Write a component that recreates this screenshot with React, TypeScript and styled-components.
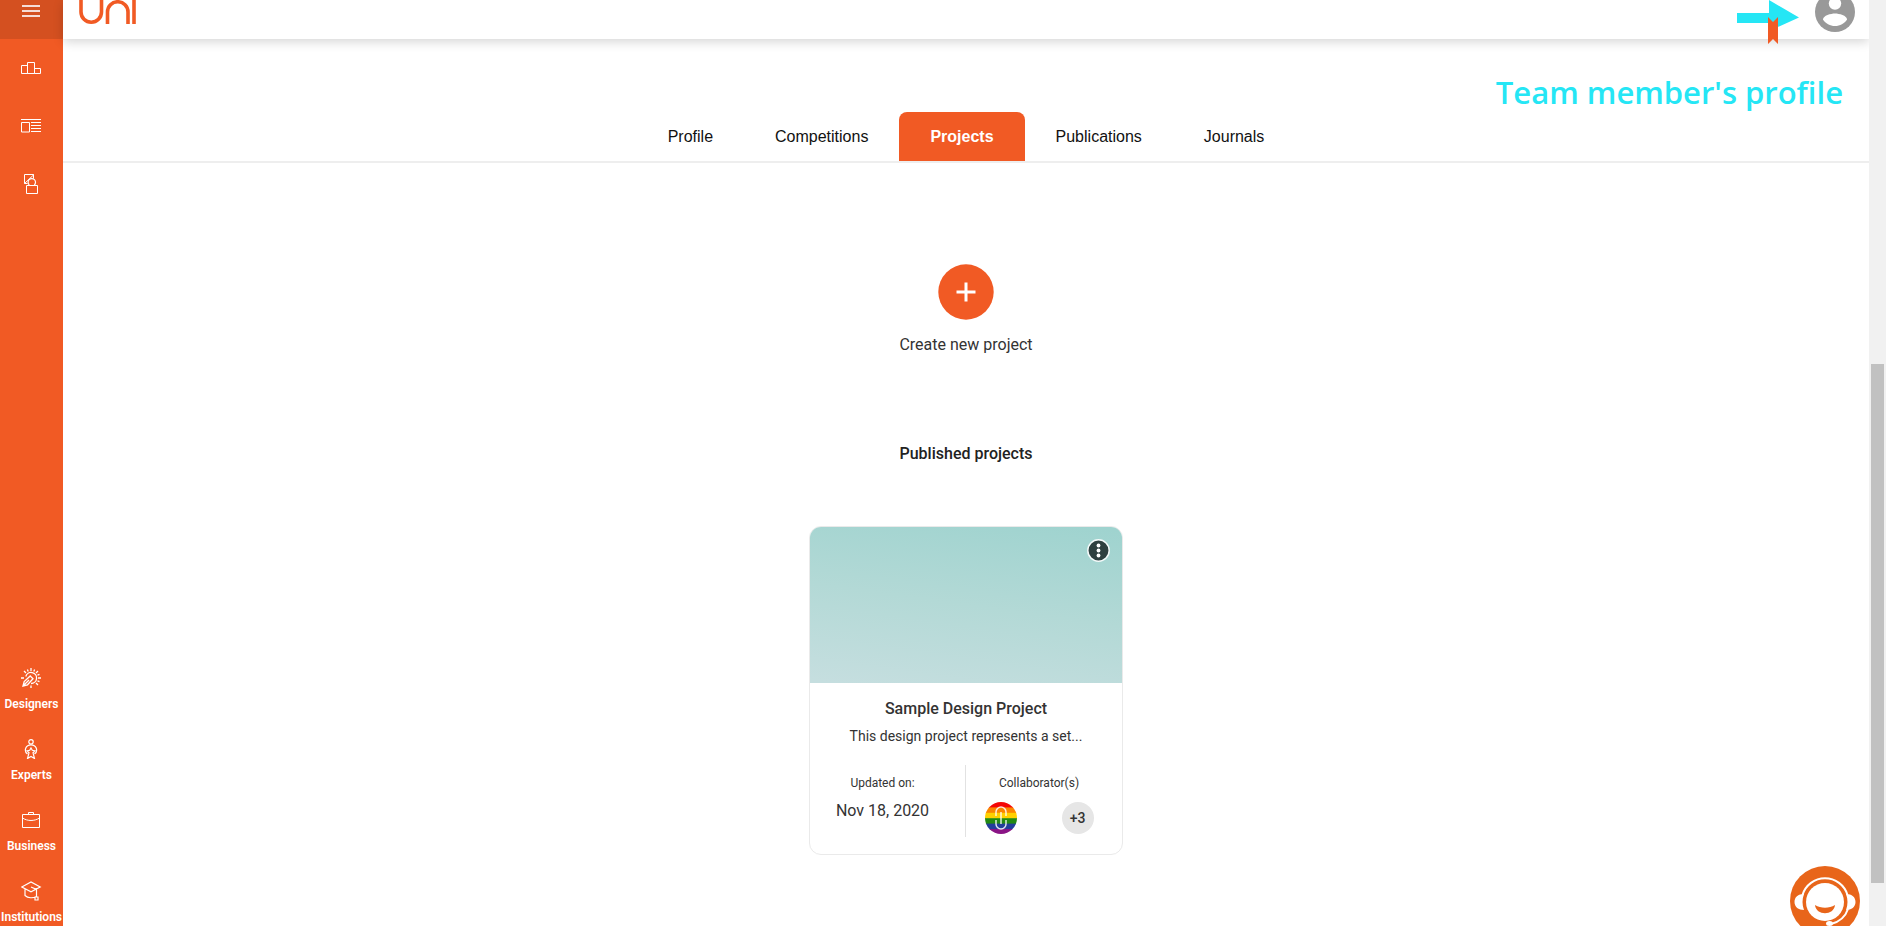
import React from "react";
import styled, { createGlobalStyle } from "styled-components";

const ORANGE = "#f15a24";
const CYAN = "#25e6f5";

const GlobalStyle = createGlobalStyle`
  *, *::before, *::after { box-sizing: border-box; }
  body { margin: 0; background: #fff; color: #333; font-family: Roboto, sans-serif; }
  button { border: 0; padding: 0; background: none; font: inherit; color: inherit; cursor: pointer; }
  a { color: inherit; text-decoration: none; }
  h2, h3, p, ul { margin: 0; padding: 0; }
  svg { display: block; }
`;

const Page = styled.div`
  display: grid;
  grid-template-columns: 63px minmax(0, 1fr) 17px;
  min-height: 100vh;
`;

const Sidebar = styled.aside`
  position: sticky;
  top: 0;
  height: 100vh;
  overflow: hidden;
  display: flex;
  flex-direction: column;
  justify-content: space-between;
  background: ${ORANGE};
  color: #fff;
`;

const MenuButton = styled.button`
  display: flex;
  justify-content: center;
  width: 100%;
  height: 39px;
  padding-top: 1px;
  background: #d45020;
`;

const NavGroup = styled.nav`
  display: flex;
  flex-direction: column;
`;

const NavIcon = styled.a`
  display: grid;
  place-items: center;
  height: 58px;
`;

const RoleLink = styled.a`
  display: flex;
  flex-direction: column;
  flex-shrink: 0;
  align-items: center;
  gap: 8px;
  height: 71px;
  font-size: 12px;
  font-weight: 600;
  line-height: 16px;
`;

const RoleGroup = styled(NavGroup)`
  height: 258px;
  flex-shrink: 0;
`;

const Main = styled.main`
  position: relative;
  padding-bottom: 64px;
`;

const Header = styled.header`
  position: relative;
  display: flex;
  align-items: flex-start;
  justify-content: space-between;
  height: 39px;
  padding: 0 14px 0 16px;
  background: #fff;
  box-shadow: 0 3px 10px rgba(0, 0, 0, 0.16);
`;

const Pointer = styled.svg`
  position: absolute;
  top: 0;
  right: 70px;
`;

const Note = styled.p`
  position: absolute;
  top: 70px;
  right: 26px;
  color: ${CYAN};
  font-family: "Open Sans", sans-serif;
  font-size: 31px;
  font-weight: 600;
  line-height: 44px;
`;

const Tabs = styled.nav`
  display: flex;
  justify-content: center;
  padding-top: 73px;
  border-bottom: 2px solid #eee;
`;

const Tab = styled.a<{ $active?: boolean }>`
  height: 49px;
  padding: 0 31px;
  border-radius: 8px 8px 0 0;
  background: ${(p) => (p.$active ? ORANGE : "transparent")};
  color: ${(p) => (p.$active ? "#fff" : "#111")};
  font-family: "Liberation Sans", Arial, sans-serif;
  font-size: 16px;
  font-weight: ${(p) => (p.$active ? 700 : 400)};
  line-height: 49px;
`;

const Content = styled.section`
  display: flex;
  flex-direction: column;
  align-items: center;
  padding-top: 101px;
`;

const CreateButton = styled.button`
  display: flex;
  flex-direction: column;
  align-items: center;
  gap: 13px;
  font-size: 16px;
  line-height: 24px;
`;

const SectionTitle = styled.h2`
  margin: 85px 0 60px;
  font-size: 16px;
  font-weight: 500;
  line-height: 24px;
  color: #222;
`;

const Card = styled.article`
  position: relative;
  width: 314px;
  overflow: hidden;
  border: 1px solid #eaeaea;
  border-radius: 12px;
  text-align: center;
`;

const Cover = styled.div`
  height: 156px;
  background: linear-gradient(188deg, #9fd3cf 2%, #b3d9d6 50%, #c5dedf 98%);
`;

const MoreButton = styled.button`
  position: absolute;
  top: 12px;
  right: 12px;
`;

const CardBody = styled.div`
  padding: 14px 0 17px;
`;

const CardTitle = styled.h3`
  font-size: 16px;
  font-weight: 500;
  line-height: 24px;
`;

const CardText = styled.p`
  margin-top: 5px;
  font-size: 14px;
  line-height: 20px;
`;

const Meta = styled.div`
  display: grid;
  grid-template-columns: 1fr 1fr;
  height: 72px;
  margin-top: 19px;
`;

const MetaCell = styled.div<{ $divided?: boolean }>`
  display: flex;
  flex-direction: column;
  align-items: center;
  gap: 8px;
  padding: 10px 10px 0 0;
  border-right: ${(p) => (p.$divided ? "1px solid #e2e2e2" : "0")};
`;

const MetaLabel = styled.span`
  font-size: 12px;
  line-height: 16px;
`;

const MetaDate = styled.time`
  font-size: 16px;
  line-height: 24px;
`;

const People = styled.div`
  display: flex;
  gap: 45px;
  padding-top: 3px;
`;

const More = styled.span`
  width: 32px;
  height: 32px;
  border-radius: 50%;
  background: #e6e6e6;
  font-size: 14px;
  font-weight: 500;
  line-height: 32px;
`;

const ScrollTrack = styled.div`
  position: sticky;
  top: 0;
  height: 100vh;
  padding: 0 2px;
  display: flex;
  flex-direction: column;
  background: #f1f1f1;
`;

const ScrollThumb = styled.div`
  height: 56%;
  margin: auto 0 43px;
  background: #c1c1c1;
`;

const SupportButton = styled.button`
  position: fixed;
  right: 26px;
  bottom: -10px;
`;

const line = { fill: "none", stroke: "currentColor", strokeWidth: 1 } as const;

const BarsIcon = () => (
  <svg width="21" height="12" viewBox="0 0 21 12" {...line}>
    <path d="M.5 3.500h6v8h-6zM6.500.5h7v11h-7zM13.500 6.500h6v5h-6z" />
  </svg>
);

const ArticleIcon = () => (
  <svg width="21" height="14" viewBox="0 0 21 14" {...line}>
    <path d="M0 .5h20M.5 3.500h8v9.500h-8zM10 3.500h10M10 6.500h10M10 9.500h10M10 12.500h10" />
  </svg>
);

const ShapesIcon = () => (
  <svg width="15" height="20" viewBox="0 0 15 20" {...line}>
    <path d="M9.500 4.500V.5H.5v9L10 .5M.5 9.500h3" />
    <path d="M5.300 11a3.700 3.700 0 1 1 5 0" strokeWidth="1.200" />
    <path d="M2.500 11.500h11v8h-11z" />
  </svg>
);

const DesignerIcon = () => (
  <svg width="21" height="20" viewBox="0 0 21 20" {...line} strokeWidth="1.300">
    <path d="M4.800 8.500A5.500 5.500 0 1 1 10 15.500" />
    <path d="m2 18 1.200-4.500 6-5.500 2.800 2.800-5.500 6zM2 18l6-6" />
    <path d="M10 0v3M10 17.500V20M17 10h3M0 10h3M15 5l2-2M5 5 3 3M15 15l2 2M12.800 3.500l.8-2M7.200 3.500l-.8-2M16.500 7.200l2-.8M16.500 12.800l2 .8" />
  </svg>
);

const ExpertIcon = () => (
  <svg width="15" height="20" viewBox="0 0 15 20" {...line} strokeWidth="1.200">
    <circle cx="7" cy="2.800" r="2.200" />
    <path d="M3.500 15C1.500 13.500 1 11 1.800 9 2.700 6.800 4.500 5.800 7 5.800s4.300 1 5.200 3.200c.8 2 .3 4.500-1.700 6" />
    <path d="m7 9 1.300 2.300 2.700.5-2 2 1.500 5.700L7 17.500l-3.500 2L5 13.800l-2-2 2.700-.5z" />
  </svg>
);

const BusinessIcon = () => (
  <svg width="19" height="16" viewBox="0 0 19 16" {...line}>
    <path d="M.5 2.500h17v13H.5zM6.500 2.500v-2h5v2M.5 6c5 3.300 12 3.300 17 0" />
  </svg>
);

const InstitutionIcon = () => (
  <svg width="21" height="20" viewBox="0 0 21 20" {...line} strokeWidth="1.200">
    <path d="M.8 6 10 1l9.200 5L10 10.800zM4 8v6.500c3 2.800 8 2.800 11.500 1M10 6l5.500 2.500V16M14 16h3v3h-3z" />
  </svg>
);

const roles = [
  { label: "Designers", icon: <DesignerIcon /> },
  { label: "Experts", icon: <ExpertIcon /> },
  { label: "Business", icon: <BusinessIcon /> },
  { label: "Institutions", icon: <InstitutionIcon /> },
];

const RoleIcon = styled.span`
  display: grid;
  place-items: center;
  height: 20px;
`;

const tabs = ["Profile", "Competitions", "Projects", "Publications", "Journals"];

const flag = ["#f40606", "#fb8500", "#ffd000", "#238a12", "#233e9b", "#8a1485"];

export default function App() {
  return (
    <>
      <GlobalStyle />
      <Page>
        <Sidebar>
          <NavGroup>
            <MenuButton aria-label="Menu">
              <svg width="19" height="20" viewBox="0 0 19 20" {...line} stroke="#f5dcd6" strokeWidth="2">
                <path d="M0 5h18M0 10h18M0 15h18" />
              </svg>
            </MenuButton>
            <NavIcon href="#competitions" aria-label="Competitions"><BarsIcon /></NavIcon>
            <NavIcon href="#articles" aria-label="Articles"><ArticleIcon /></NavIcon>
            <NavIcon href="#projects" aria-label="Projects"><ShapesIcon /></NavIcon>
          </NavGroup>
          <RoleGroup>
            {roles.map((r) => (
              <RoleLink key={r.label} href={"#" + r.label.toLowerCase()}>
                <RoleIcon>{r.icon}</RoleIcon>
                <span>{r.label}</span>
              </RoleLink>
            ))}
          </RoleGroup>
        </Sidebar>

        <Main>
          <Header>
            <a href="#home" aria-label="Uni">
              <svg width="58" height="25" viewBox="0 0 58 25" fill="none" stroke={ORANGE} strokeWidth="3.600">
                <path d="M2 0v12a10.200 10.200 0 0 0 20.500 0V0" />
                <path d="M28.500 24V12a10.200 10.200 0 0 1 20.500 0v12" />
                <path d="M55 0v24" />
              </svg>
            </a>
            <button aria-label="Account">
              <svg width="40" height="38" viewBox="0 0 40 38">
                <circle cx="20" cy="12" r="20" fill="#999" />
                <circle cx="20" cy="3.500" r="6.200" fill="#fff" />
                <path d="M8 19.500c0-4 8-6 12-6s12 2 12 6c-2.500 4-7 6.500-12 6.500s-9.500-2.500-12-6.500" fill="#fff" />
              </svg>
            </button>
            <Pointer width="62" height="44" viewBox="0 0 62 44">
              <path d="M0 13h32V0l30 17.500L32 31v-8H0z" fill={CYAN} />
              <path d="m31 17 5 5 5-5v27l-5-5-5 5z" fill={ORANGE} />
            </Pointer>
          </Header>
          <Note>Team member's profile</Note>

          <Tabs>
            {tabs.map((t) => (
              <Tab key={t} href={"#" + t.toLowerCase()} $active={t === "Projects"}>{t}</Tab>
            ))}
          </Tabs>

          <Content>
            <CreateButton>
              <svg width="56" height="56" viewBox="0 0 56 56">
                <circle cx="28" cy="28" r="27.700" fill={ORANGE} />
                <path d="M28 18.500v19M18.500 28h19" stroke="#fff" strokeWidth="3" />
              </svg>
              Create new project
            </CreateButton>

            <SectionTitle>Published projects</SectionTitle>

            <Card>
              <Cover />
              <MoreButton aria-label="Project options">
                <svg width="23" height="23" viewBox="0 0 23 23">
                  <circle cx="11.500" cy="11.500" r="10.700" fill="#2f4040" stroke="#f4fafa" strokeWidth="1.500" />
                  <g fill="#fff">
                    <circle cx="11.500" cy="6.500" r="1.900" />
                    <circle cx="11.500" cy="11.500" r="1.900" />
                    <circle cx="11.500" cy="16.500" r="1.900" />
                  </g>
                </svg>
              </MoreButton>
              <CardBody>
                <CardTitle>Sample Design Project</CardTitle>
                <CardText>This design project represents a set...</CardText>
                <Meta>
                  <MetaCell $divided>
                    <MetaLabel>Updated on:</MetaLabel>
                    <MetaDate dateTime="2020-11-18">Nov 18, 2020</MetaDate>
                  </MetaCell>
                  <MetaCell>
                    <MetaLabel>Collaborator(s)</MetaLabel>
                    <People>
                      <svg width="32" height="32" viewBox="0 0 32 32">
                        <clipPath id="badge"><circle cx="16" cy="16" r="16" /></clipPath>
                        <g clipPath="url(#badge)">
                          {flag.map((c, i) => (
                            <rect key={c} y={i * 5.4} width="32" height="6" fill={c} />
                          ))}
                        </g>
                        <g fill="none" stroke="#fff" strokeOpacity=".85" strokeWidth="1.500">
                          <path d="M11 14v-4a5 5 0 0 1 10 0v4M11 18v4a5 5 0 0 0 10 0v-4M16 10v12" />
                        </g>
                      </svg>
                      <More>+3</More>
                    </People>
                  </MetaCell>
                </Meta>
              </CardBody>
            </Card>
          </Content>
        </Main>

        <ScrollTrack aria-hidden="true">
          <ScrollThumb />
        </ScrollTrack>
      </Page>

      <SupportButton aria-label="Support">
        <svg width="70" height="70" viewBox="0 0 70 70">
          <circle cx="35" cy="35" r="35" fill="#e8651a" />
          <path d="M12.500 29a23.500 23.500 0 0 1 45 0" fill="none" stroke="#fff" strokeWidth="2" />
          <path d="M14 28c-6 0-9.500 3-9.500 8s4 8 9.500 8c-2-5-2-11 0-16zM56 28c6 0 9.500 3 9.500 8s-4 8-9.500 8c2-5 2-11 0-16z" fill="#fff" />
          <path d="M58 43c-3 9-9 13-17 15" fill="none" stroke="#fff" strokeWidth="2" />
          <ellipse cx="39.500" cy="57.500" rx="3.500" ry="2.500" fill="#fff" />
          <circle cx="35" cy="36" r="19" fill="#fff" />
          <path d="M25 39c6 3.500 14 3.500 20 0-1 11-19 11-20 0z" fill="#e8651a" />
        </svg>
      </SupportButton>
    </>
  );
}
